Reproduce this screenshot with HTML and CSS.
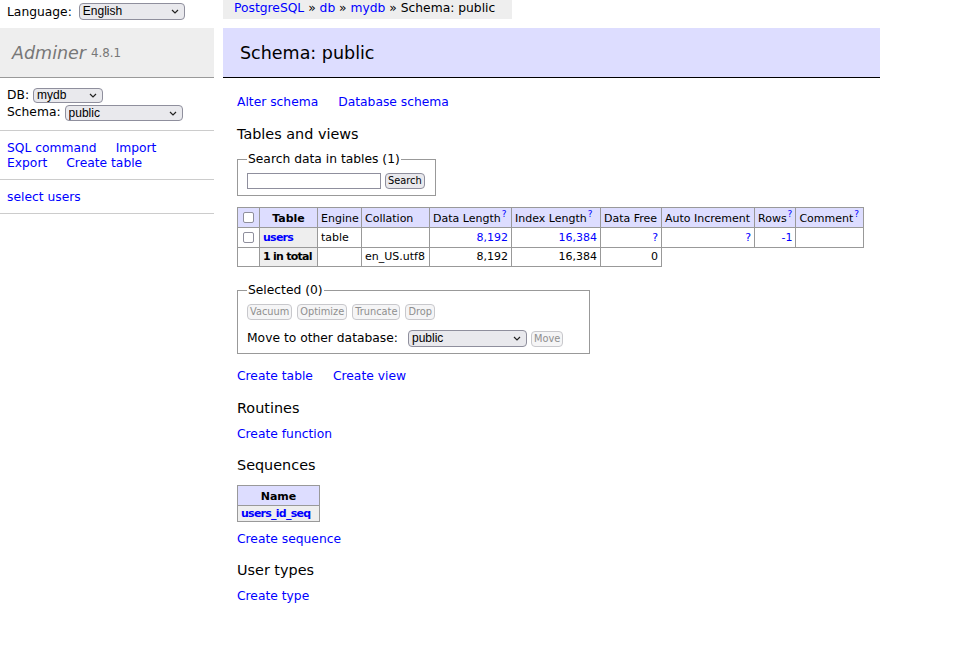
FILE: index.html
```html
<!DOCTYPE html>
<html>
<head>
<meta charset="utf-8">
<title>Schema: public - Adminer</title>
<link rel="stylesheet" href="styles.css">
</head>
<body>
<div class="page">
  <aside class="side">
    <form class="lang">
      <span>Language:</span>
      <span class="sel sel-lang"><select><option>English</option></select><svg class="chev" viewBox="0 0 8 5" width="8" height="5"><path d="M1 1l3 3 3-3" fill="none" stroke="#222" stroke-width="1.2"/></svg></span>
    </form>
    <h1 class="brand"><a class="brand-name" href="#">Adminer</a> <span class="version">4.8.1</span></h1>
    <div class="side-sec dbs">
      <div class="row">DB: <span class="sel sel-db"><select><option>mydb</option></select><svg class="chev" viewBox="0 0 8 5" width="8" height="5"><path d="M1 1l3 3 3-3" fill="none" stroke="#222" stroke-width="1.2"/></svg></span></div>
      <div class="row">Schema: <span class="sel sel-schema"><select><option>public</option></select><svg class="chev" viewBox="0 0 8 5" width="8" height="5"><path d="M1 1l3 3 3-3" fill="none" stroke="#222" stroke-width="1.2"/></svg></span></div>
    </div>
    <div class="side-sec links-side">
      <div><a href="#">SQL command</a><a href="#">Import</a></div>
      <div><a href="#">Export</a><a href="#">Create table</a></div>
    </div>
    <div class="side-sec tables-side">
      <a href="#">select users</a>
    </div>
  </aside>
  <main class="main">
    <div class="crumb"><a href="#">PostgreSQL</a> » <a href="#">db</a> » <a href="#">mydb</a> » Schema: public</div>
    <h2 class="title">Schema: public</h2>
    <div class="content">
      <p class="links m17"><a href="#">Alter schema</a><a href="#">Database schema</a></p>
      <h3 class="h3 m15">Tables and views</h3>
      <fieldset class="fs fs-search">
        <legend>Search data in tables (1)</legend>
        <div class="fs-row"><input class="txt" type="text"><button class="btn">Search</button></div>
      </fieldset>
      <table class="grid main-grid">
        <thead>
          <tr>
            <td class="chk c1"><span class="cb"></span></td>
            <th class="c2">Table</th>
            <td class="c3">Engine</td>
            <td class="c4">Collation</td>
            <td class="c5">Data Length<sup><a href="#">?</a></sup></td>
            <td class="c6">Index Length<sup><a href="#">?</a></sup></td>
            <td class="c7">Data Free</td>
            <td class="c8">Auto Increment</td>
            <td class="c9">Rows<sup><a href="#">?</a></sup></td>
            <td class="c10">Comment<sup><a href="#">?</a></sup></td>
          </tr>
        </thead>
        <tbody>
          <tr>
            <td class="chk"><span class="cb"></span></td>
            <th><a href="#">users</a></th>
            <td>table</td>
            <td></td>
            <td class="num"><a href="#">8,192</a></td>
            <td class="num"><a href="#">16,384</a></td>
            <td class="num"><a href="#">?</a></td>
            <td class="num"><a href="#">?</a></td>
            <td class="num"><a href="#">-1</a></td>
            <td></td>
          </tr>
          <tr class="total">
            <td></td>
            <th>1 in total</th>
            <td></td>
            <td>en_US.utf8</td>
            <td class="num">8,192</td>
            <td class="num">16,384</td>
            <td class="num">0</td>
          </tr>
        </tbody>
      </table>
      <fieldset class="fs fs-selected">
        <legend>Selected (0)</legend>
        <div class="fs-row btns"><button class="btn dis">Vacuum</button><button class="btn dis">Optimize</button><button class="btn dis">Truncate</button><button class="btn dis">Drop</button></div>
        <div class="fs-row move">Move to other database: <span class="sel sel-move"><select><option>public</option></select><svg class="chev" viewBox="0 0 8 5" width="8" height="5"><path d="M1 1l3 3 3-3" fill="none" stroke="#222" stroke-width="1.2"/></svg></span><button class="btn dis">Move</button></div>
      </fieldset>
      <p class="links m15"><a href="#">Create table</a><a href="#">Create view</a></p>
      <h3 class="h3 m15">Routines</h3>
      <p class="links m10"><a href="#">Create function</a></p>
      <h3 class="h3 m14">Sequences</h3>
      <table class="grid seq-grid">
        <thead><tr><th>Name</th></tr></thead>
        <tbody><tr><th><a href="#">users_id_seq</a></th></tr></tbody>
      </table>
      <p class="links m10"><a href="#">Create sequence</a></p>
      <h3 class="h3 m14">User types</h3>
      <p class="links m10"><a href="#">Create type</a></p>
    </div>
  </main>
</div>
</body>
</html>
```

FILE: styles.css
```css
html, body {
  margin: 0;
  padding: 0;
  background: #fff;
}
body {
  color: #000;
  font-family: "DejaVu Sans", Verdana, sans-serif;
  font-size: 12.3px;
  line-height: 15px;
}
a {
  color: #00f;
  text-decoration: none;
}
.page {
  display: flex;
  align-items: flex-start;
}
.side {
  width: 214px;
  flex: none;
}
.lang {
  height: 28px;
  display: flex;
  align-items: flex-start;
  padding: 3px 0 0 7px;
  box-sizing: border-box;
  gap: 7px;
}
.lang > span:first-child {
  line-height: 18px;
}
.sel {
  position: relative;
  display: inline-block;
  vertical-align: middle;
}
.sel select {
  appearance: none;
  -webkit-appearance: none;
  display: block;
  box-sizing: border-box;
  height: 17px;
  margin: 0;
  padding: 0 16px 0 3px;
  border: 1px solid #8f8f9d;
  border-radius: 4px;
  background: #e9e9ed;
  color: #000;
  font-family: "Liberation Sans", Arial, sans-serif;
  font-size: 12px;
  line-height: 15px;
}
.sel .chev {
  position: absolute;
  right: 6px;
  top: 6px;
  pointer-events: none;
}
.sel-lang select { width: 106px; }
.sel-db select { width: 70px; height: 15px; line-height: 13px; }
.sel-db .chev { top: 5px; }
.sel-schema select { width: 118px; height: 16px; line-height: 14px; }
.sel-move select { width: 119px; }
.brand {
  margin: 0;
  box-sizing: border-box;
  background: #eee;
  border-bottom: 1px solid #999;
  height: 50px;
  padding: 0 0 0 12px;
  display: flex;
  align-items: center;
  gap: 5px;
  font-weight: normal;
  font-size: 17.5px;
}
.brand-name {
  color: #777;
  font-style: italic;
  line-height: 20px;
}
.version {
  color: #777;
  font-size: 11.8px;
  position: relative;
  top: 1px;
}
.side-sec {
  border-bottom: 1px solid #ccc;
  padding: 9px 7px;
}
.links-side, .tables-side {
  padding-top: 10px;
  padding-bottom: 8px;
}
.dbs .row {
  height: 17px;
  display: flex;
  align-items: center;
  gap: 4px;
}
.links-side a {
  margin-right: 19px;
}
.main {
  margin-left: 9px;
  width: 657px;
  flex: none;
}
.crumb {
  display: inline-block;
  background: #eee;
  height: 19px;
  line-height: 17px;
  padding: 0 17px 0 11px;
  white-space: nowrap;
  vertical-align: top;
}
.title {
  margin: 9px 0 0;
  height: 50px;
  box-sizing: border-box;
  background: #ddf;
  border-bottom: 1px solid #000;
  font-weight: normal;
  font-size: 17.5px;
  line-height: 20px;
  padding: 15px 0 0 17px;
  color: #000;
}
.content {
  padding-left: 14px;
}
.links {
  margin: 0;
  line-height: 15px;
}
.links a {
  margin-right: 20px;
  white-space: nowrap;
}
.h3 {
  margin: 0;
  font-weight: normal;
  font-size: 14.4px;
  line-height: 18px;
}
.m10 { margin-top: 10px; }
.m14 { margin-top: 14px; }
.m15 { margin-top: 15px; }
.m17 { margin-top: 17px; }
.fs {
  display: block;
  width: fit-content;
  margin: 9px 0 0;
  padding: 0 9px 6px;
  border: 1px solid #999;
  min-inline-size: 0;
}
.fs legend {
  padding: 0 1px;
  line-height: 15px;
}
.fs-search {
  padding-right: 10px;
}
.fs-search .fs-row {
  display: flex;
  align-items: center;
  gap: 4px;
  padding-top: 6px;
}
.txt {
  box-sizing: border-box;
  width: 134px;
  height: 16px;
  margin: 0;
  border: 1px solid #8f8f9d;
  border-radius: 0;
  padding: 0 2px;
}
.btn {
  box-sizing: border-box;
  height: 16px;
  margin: 0;
  padding: 0 2px;
  font-family: "DejaVu Sans", Verdana, sans-serif;
  font-size: 9.8px;
  line-height: 14px;
  background: #e9e9ed;
  border: 1px solid #8f8f9d;
  border-radius: 4px;
  color: #000;
}
.btn.dis {
  color: #8f8f8f;
  background: #f5f5f6;
  border-color: #c8c8cc;
}
.grid {
  border-collapse: collapse;
  font-size: 11px;
  line-height: 13px;
}
.grid td, .grid th {
  border: 1px solid #999;
  padding: 2px 3px;
  white-space: nowrap;
  text-align: left;
  box-sizing: border-box;
}
.grid th {
  background: #eee;
  letter-spacing: -0.75px;
}
.grid thead td, .grid thead th {
  background: #ddf;
  padding: 4px 3px 2px;
}
.grid thead th {
  text-align: center;
  padding-left: 3px;
  padding-right: 3px;
  letter-spacing: 0;
}
.grid thead td.c3 {
  padding-right: 2px;
}
.grid .num {
  text-align: right;
}
.grid sup {
  font-size: 9px;
  line-height: 0;
  vertical-align: 5px;
  margin-left: 1px;
}
.grid .chk {
  padding: 2px 5px;
}
.grid tr.total td, .grid tr.total th {
  padding-bottom: 3px;
}
.cb {
  display: block;
  box-sizing: border-box;
  width: 11px;
  height: 11px;
  border: 1px solid #8f8f9d;
  border-radius: 2px;
  background: #fff;
}
.grid thead td.chk {
  padding-top: 4px;
  padding-bottom: 4px;
}
.grid tbody tr td.chk {
  padding-top: 4px;
  padding-bottom: 4px;
}
.c1 { width: 22px; }
.c2 { width: 58px; }
.c3 { width: 44px; }
.c4 { width: 68px; }
.c5 { width: 82px; }
.c6 { width: 89px; }
.c7 { width: 61px; }
.c8 { width: 93px; }
.c9 { width: 41px; }
.c10 { width: 68px; }
.main-grid {
  margin-top: 11px;
}
.fs-selected {
  margin-top: 16px;
  width: 333px;
  padding-bottom: 6px;
}
.btns {
  display: flex;
  gap: 5px;
  margin-top: 6px;
}
.move {
  display: flex;
  align-items: center;
  gap: 4px;
  margin-top: 10px;
}
.move .sel {
  margin-left: 6px;
}
.seq-grid {
  margin-top: 11px;
}
.seq-grid th {
  width: 82px;
}
.seq-grid thead th {
  padding: 4px 3px 2px;
}
.seq-grid tbody th {
  padding: 1px 3px;
}
```
